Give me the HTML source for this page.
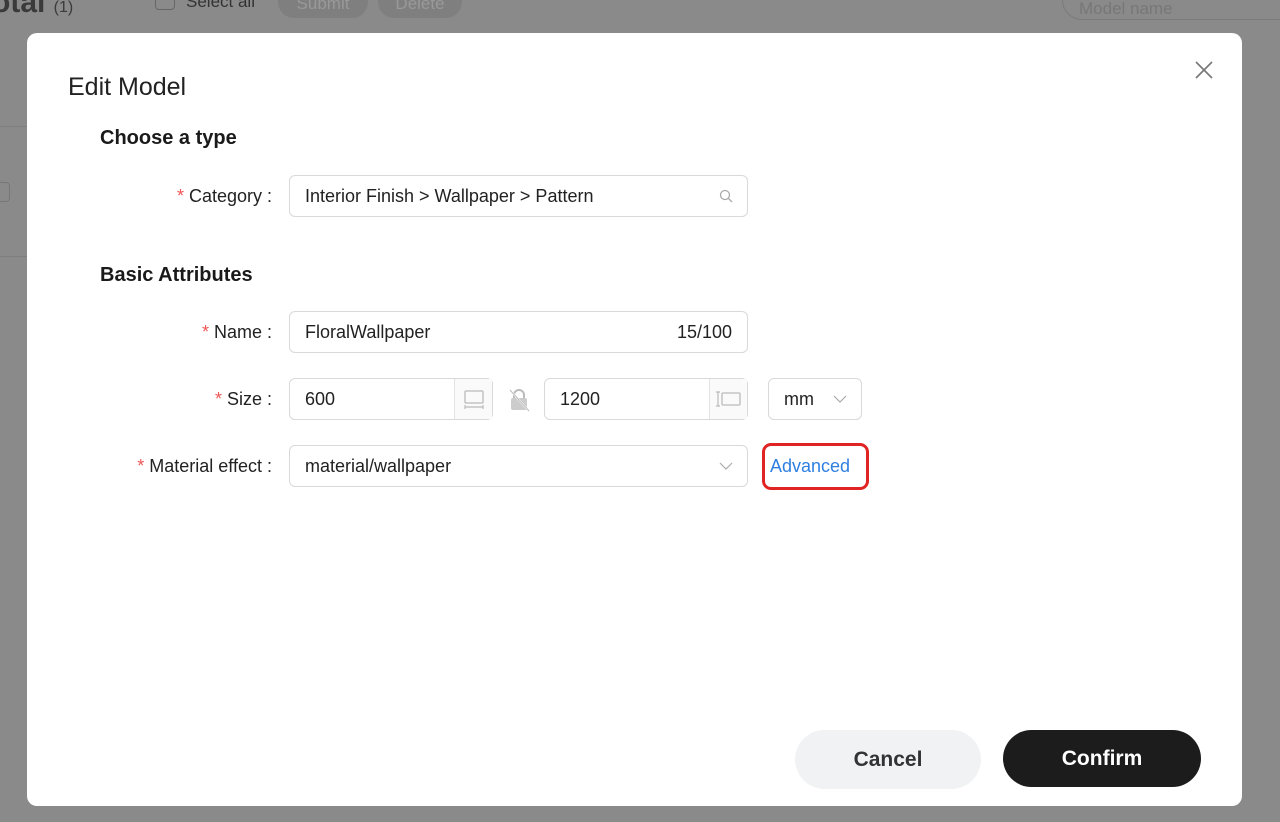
<!DOCTYPE html>
<html><head><meta charset="utf-8"><style>
*{box-sizing:border-box;margin:0;padding:0}
body{width:1280px;height:822px;background:#8a8a8a;font-family:"Liberation Sans",sans-serif;position:relative;overflow:hidden;color:#222}
.a{position:absolute}
.modal{position:absolute;left:27px;top:33px;width:1215px;height:773px;background:#fff;border-radius:10px}
.lbl{position:absolute;font-size:18px;color:#222;text-align:right;width:200px}
.lbl i{color:#e55;font-style:normal;margin-right:5px}
.inp{position:absolute;border:1px solid #d9d9d9;border-radius:6px;height:42px;font-size:18px;line-height:40px;padding-left:15px;color:#222}
h3{position:absolute;font-size:20px;font-weight:bold;color:#1a1a1a}
</style></head><body>
<div class="a" style="left:-8px;top:-14px;font-size:30px;font-weight:bold;color:#3a3a3a">otal <span style="font-size:16px;font-weight:normal">(1)</span></div>
<div class="a" style="left:155px;top:-8px;width:20px;height:18px;border:1px solid #666;border-radius:4px"></div>
<div class="a" style="left:186px;top:-8px;font-size:17px;color:#333">Select all</div>
<div class="a" style="left:278px;top:-14px;width:90px;height:32px;border-radius:16px;background:#7f7f7f;color:#999;font-size:17px;text-align:center;line-height:36px">Submit</div>
<div class="a" style="left:378px;top:-14px;width:84px;height:32px;border-radius:16px;background:#7f7f7f;color:#999;font-size:17px;text-align:center;line-height:36px">Delete</div>
<div class="a" style="left:1062px;top:-20px;width:240px;height:40px;border:1px solid #7a7a7a;border-radius:20px;color:#777;font-size:17px;padding:18px 0 0 16px">Model name</div>
<div class="a" style="left:0;top:126px;width:27px;height:1px;background:#7e7e7e"></div>
<div class="a" style="left:0;top:256px;width:27px;height:1px;background:#7e7e7e"></div>
<div class="a" style="left:-6px;top:182px;width:16px;height:20px;border:1px solid #777;border-radius:4px"></div>
<div class="modal">
<div class="a" style="left:41px;top:40px;font-size:25px;color:#222">Edit Model</div>
<svg class="a" style="left:1168px;top:28px" width="18" height="18"><path d="M1 1L17 17M17 1L1 17" stroke="#777" stroke-width="1.6"/></svg>
<h3 style="left:73px;top:94px">Choose a type</h3>
<div class="lbl" style="left:45px;top:153px"><i>*</i>Category :</div>
<div class="inp" style="left:262px;top:142px;width:459px">Interior Finish &gt; Wallpaper &gt; Pattern
<svg class="a" style="right:14px;top:13px" width="14" height="14"><circle cx="6" cy="6" r="4.5" fill="none" stroke="#aaa" stroke-width="1.3"/><path d="M9.5 9.5L13 13" stroke="#aaa" stroke-width="1.3"/></svg></div>
<h3 style="left:73px;top:231px">Basic Attributes</h3>
<div class="lbl" style="left:45px;top:289px"><i>*</i>Name :</div>
<div class="inp" style="left:262px;top:278px;width:459px">FloralWallpaper<span class="a" style="right:15px;top:0">15/100</span></div>
<div class="lbl" style="left:45px;top:356px"><i>*</i>Size :</div>
<div class="inp" style="left:262px;top:345px;width:204px">600<div class="a" style="right:0;top:0;width:38px;height:40px;border-left:1px solid #e3e3e3;background:#fafafa"><svg class="a" style="left:9px;top:11px" width="20" height="20"><rect x="1" y="1" width="18" height="12" rx="1" fill="none" stroke="#bbb" stroke-width="1.3"/><path d="M1 17H19M1 15V19M19 15V19" stroke="#bbb" stroke-width="1.2"/></svg></div></div>
<svg class="a" style="left:481px;top:355px" width="22" height="24"><path d="M6 10V7a5 5 0 0110 0v3" fill="none" stroke="#bbb" stroke-width="2"/><rect x="3" y="10" width="16" height="12" rx="2" fill="#ccc"/><path d="M2 2L21 23" stroke="#fff" stroke-width="2"/><path d="M2 2L21 23" stroke="#bbb" stroke-width="1"/></svg>
<div class="inp" style="left:517px;top:345px;width:204px">1200<div class="a" style="right:0;top:0;width:38px;height:40px;border-left:1px solid #e3e3e3;background:#fafafa"><svg class="a" style="left:6px;top:12px" width="26" height="16"><rect x="6" y="2" width="18" height="12" rx="1" fill="none" stroke="#bbb" stroke-width="1.3"/><path d="M2 1V15M0 1H4M0 15H4" stroke="#bbb" stroke-width="1.2"/></svg></div></div>
<div class="inp" style="left:741px;top:345px;width:94px">mm<svg class="a" style="right:14px;top:16px" width="14" height="9"><path d="M1 1L7 7L13 1" fill="none" stroke="#aaa" stroke-width="1.2"/></svg></div>
<div class="lbl" style="left:45px;top:423px"><i>*</i>Material effect :</div>
<div class="inp" style="left:262px;top:412px;width:459px">material/wallpaper<svg class="a" style="right:14px;top:16px" width="14" height="9"><path d="M1 1L7 7L13 1" fill="none" stroke="#aaa" stroke-width="1.2"/></svg></div>
<div class="a" style="left:735px;top:410px;width:107px;height:47px;border:3px solid #e02424;border-radius:9px;color:#2f7fe0;font-size:18px;line-height:41px;padding-left:5px">Advanced</div>
<div class="a" style="left:768px;top:697px;width:186px;height:59px;border-radius:30px;background:#f1f2f4;font-size:21px;font-weight:bold;color:#333;text-align:center;line-height:59px">Cancel</div>
<div class="a" style="left:976px;top:697px;width:198px;height:57px;border-radius:29px;background:#1c1c1c;font-size:21px;font-weight:bold;color:#fff;text-align:center;line-height:57px">Confirm</div>
</div>
</body></html>
